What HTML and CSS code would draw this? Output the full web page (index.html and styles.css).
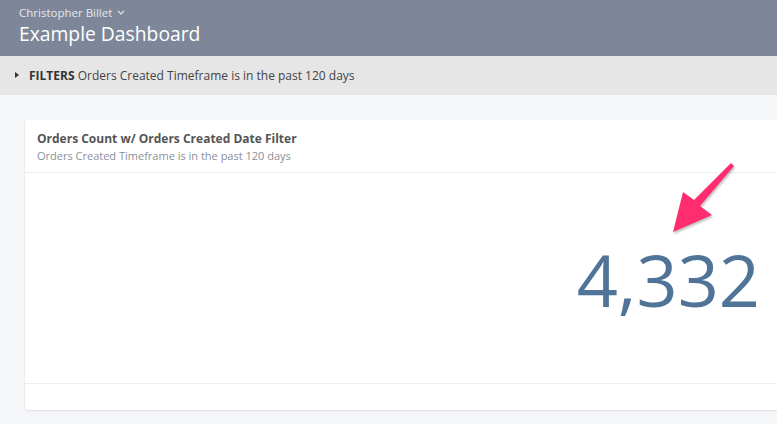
FILE: index.html
```html
<!DOCTYPE html>
<html lang="en">
    <head>
        <meta charset="UTF-8">
        <meta name="viewport" content="width=device-width, initial-scale=1.0">
        <link rel="stylesheet" href="styles.css">
        <title>Example Dashboard</title>
    </head>
    <body>
        <header class="top">
            <div class="owner">
                Christopher Billet
                <svg class="caret" width="8" height="5" viewBox="0 0 8 5"><path d="M1 1 L4 4 L7 1" fill="none" stroke="#e4e7ee" stroke-width="1.1" /></svg>
            </div>
            <h1>Example Dashboard</h1>
        </header>

        <div class="filters">
            <span class="toggle"></span>
            <b>FILTERS</b> Orders Created Timeframe is in the past 120 days
        </div>

        <main class="content">
            <section class="tile">
                <div class="tile-head">
                    <h2>Orders Count w/ Orders Created Date Filter</h2>
                    <p>Orders Created Timeframe is in the past 120 days</p>
                </div>
                <div class="tile-body">
                    <div class="value">4,332</div>
                    <!-- pink annotation arrow -->
                    <svg class="arrow" width="777" height="424" viewBox="0 0 777 424">
                        <polygon points="673,232 683,192 694,200 731,163 734,166 700,206 712,215" fill="#ff2d6f" />
                    </svg>
                </div>
                <div class="tile-foot"></div>
            </section>
        </main>
    </body>
</html>
```

FILE: styles.css
```css
body {
    margin: 0;
    font-family: "Open Sans", "Liberation Sans", sans-serif;
    background: #f5f6f8;
    overflow: hidden;
    height: 424px;
}

.top {
    background: #7e8799;
    height: 56px;
    padding: 4px 0 0 19px;
    box-sizing: border-box;
    color: white;
}

.owner {
    font-size: 11.5px;
    line-height: 17px;
    color: #e4e7ee;
}

.caret {
    margin-left: 2px;
    vertical-align: 2px;
}

.top h1 {
    margin: 0;
    font-size: 19.3px;
    font-weight: 400;
    line-height: 26px;
}

.filters {
    background: #e6e6e6;
    height: 39px;
    padding-left: 29px;
    font-size: 12px;
    line-height: 39px;
    color: #444;
    position: relative;
}

.filters b {
    color: #333;
}

.toggle {
    position: absolute;
    left: 15px;
    top: 16px;
    border-left: 4px solid #333;
    border-top: 3.5px solid transparent;
    border-bottom: 3.5px solid transparent;
}

.content {
    padding: 25px 0 0 25px;
}

.tile {
    background: white;
    border-radius: 3px;
    margin-right: -20px;
    height: 290px;
    box-shadow: 0 1px 1px #dde0e5, -1px 0 0 #eceef1;
    display: flex;
    flex-direction: column;
}

.tile-head {
    padding: 10px 12px 0;
    height: 42px;
    border-bottom: 1px solid #eeeff1;
}

.tile-head h2 {
    margin: 0;
    font-size: 12px;
    font-weight: 700;
    line-height: 17px;
    color: #555;
}

.tile-head p {
    margin: 1px 0 0;
    font-size: 11px;
    line-height: 15px;
    color: #8a8f99;
}

.tile-body {
    height: 210px;
    border-bottom: 1px solid #eeeff1;
}

.value {
    text-align: right;
    padding: 56px 37px 0 0;
    font-size: 72px;
    line-height: 100px;
    color: #507497;
}

.arrow {
    position: absolute;
    left: 0;
    top: 0;
    filter: drop-shadow(1px 2px 1px rgba(0, 0, 0, 0.25));
}
```
